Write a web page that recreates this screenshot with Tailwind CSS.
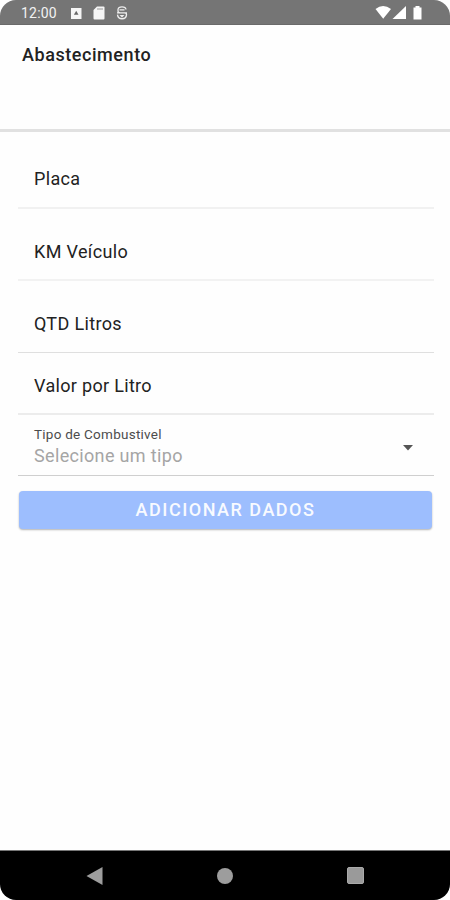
<!DOCTYPE html>
<html lang="pt-BR">
<head>
<meta charset="utf-8">
<meta name="viewport" content="width=device-width, initial-scale=1">
<title>Abastecimento</title>
<script src="https://cdn.jsdelivr.net/npm/@tailwindcss/browser@4"></script>
</head>
<body class="bg-white">
<div class="flex h-[900px] w-[450px] flex-col overflow-hidden rounded-[16px] bg-[#fefefe] font-['Roboto',sans-serif] text-[#222]">
  <div class="flex h-[25px] shrink-0 items-center border-b border-[#6a6a6a] bg-[#757575] pl-[21px] text-[#f2f2f2]">
    <span class="w-[50px] pt-[2px] text-[14px] leading-none tracking-[0.2px]">12:00</span>
    <svg class="h-[25px] w-[60px]" viewBox="71 0 60 25" fill="#f5f5f5">
      <path d="M71 8h10.500v11H71z"/><path fill="#666" d="M76.200 10.800l2.300 4h-4.600z"/>
      <path d="M97 6.500h6.500a1 1 0 0 1 1 1v11a1 1 0 0 1-1 1h-9a1 1 0 0 1-1-1v-8.500z"/>
      <path fill="#999" d="M97.500 8h1v2h-1zM99.500 8h1v2h-1zM101.500 8h1v2h-1z"/>
      <path fill="none" stroke="#eee" stroke-width="1.300" d="M126 9.500c-.5-3.500-7.500-3.500-8 0v1.500q0 1.800 2 1.800h4.500q2 0 2 1.800c-.3 5.500-8.500 5.500-9 0M117 12.800h10M119.500 9.800h5"/><path fill="#eee" d="M119.500 15h5l-2.500 2.500z"/>
    </svg>
    <svg class="mr-[25px] ml-auto h-[25px] w-[50px]" viewBox="375 0 50 25" fill="#fff">
      <path d="M375.500 9Q383 3 391 9l-7.800 9.800z"/><path d="M406 6v13h-13.500z"/><path d="M413.500 7.500h2V6h4v1.500h2V19.500h-8z"/>
    </svg>
  </div>
  <header class="flex h-[107px] shrink-0 items-start border-b-[3px] border-[#e1e1e1] pt-[18px] pl-[22px]">
    <h1 class="text-[18px] leading-[24px] font-medium tracking-[0.560px] whitespace-nowrap">Abastecimento</h1>
  </header>
  <main class="flex flex-1 flex-col pr-[16px] pl-[18px]">
    <div class="flex h-[77px] items-end border-b-2 border-[#f1f1f1] pb-[16px] pl-4 text-[18px] leading-[24px] tracking-[0.35px]">Placa</div>
    <div class="flex h-[72px] items-end border-b-2 border-[#f2f2f2] pb-[15px] pl-4 text-[18px] leading-[24px] tracking-[0.35px]">KM Veículo</div>
    <div class="flex h-[72px] items-end border-b border-[#dfdfdf] pb-[16px] pl-4 text-[18px] leading-[24px] tracking-[0.35px]">QTD Litros</div>
    <div class="flex h-[62px] items-end border-b-2 border-[#ececec] pb-[15px] pl-4 text-[18px] leading-[24px] tracking-[0.32px]">Valor por Litro</div>
    <div class="flex h-[61px] items-center justify-between border-b border-[#cfcfcf] pr-[21px] pl-4">
      <div class="flex flex-col pt-[3px]">
        <span class="text-[13.500px] leading-[18px] tracking-[0.25px] text-[#4c4c4c]">Tipo de Combustivel</span>
        <span class="text-[18px] leading-[26px] tracking-[0.34px] text-[#a5a5a5]">Selecione um tipo</span>
      </div>
      <svg class="mt-[5px] h-[6px] w-[10px]" viewBox="0 0 10 6"><path fill="#555" d="M0 0h10L5 5.500z"/></svg>
    </div>
    <button class="mt-[15px] mr-[2px] ml-[1px] flex h-[38px] items-center justify-center rounded-[4px] bg-[#9dbefe] pb-[2px] text-[18px] font-medium tracking-[1.500px] text-[#f8faff] shadow-[0_1px_2px_rgba(0,0,0,0.3)]">ADICIONAR DADOS</button>
  </main>
  <nav class="flex h-[50px] shrink-0 items-center justify-between border-t border-[#777] bg-black px-[86px]">
    <svg class="h-[18px] w-[17px]" viewBox="0 0 17 18"><path fill="#9d9d9d" d="M16.500 0v18L.5 9z"/></svg>
    <span class="size-[16px] rounded-full bg-[#9d9d9d]"></span>
    <span class="size-[17px] rounded-[2px] border border-[#aaa] bg-[#9a9a9a]"></span>
  </nav>
</div>
</body>
</html>
